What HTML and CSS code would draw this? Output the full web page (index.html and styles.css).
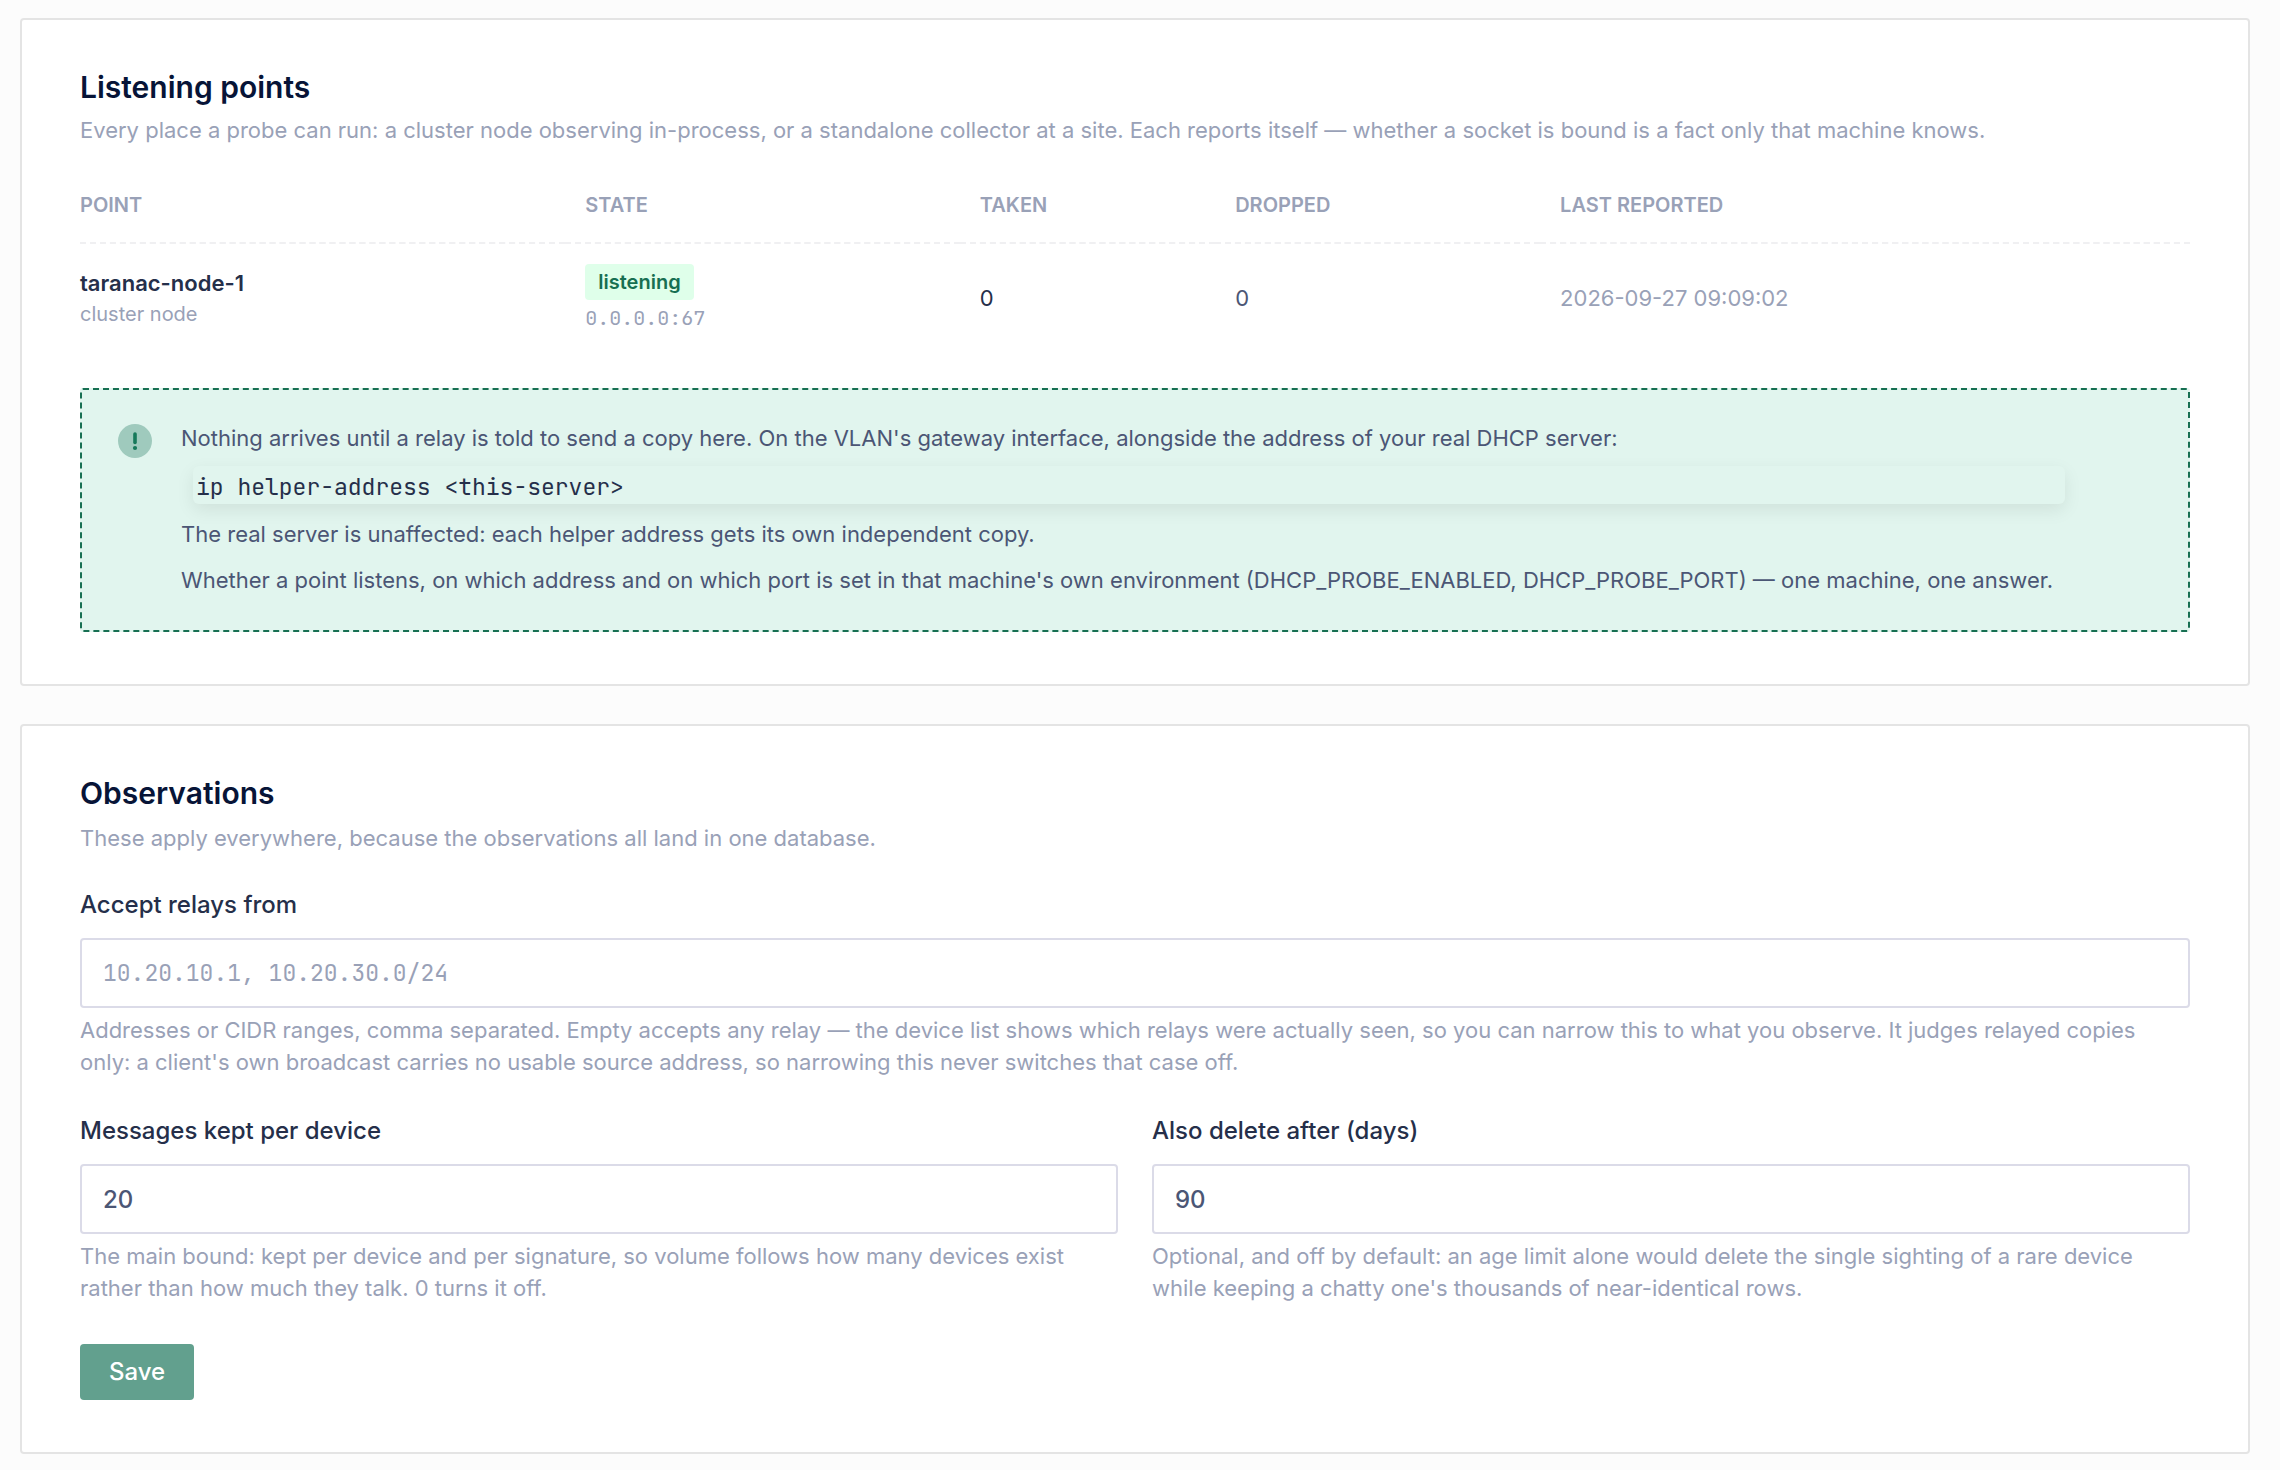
FILE: index.html
```html
<!DOCTYPE html>
<html lang="en">
<head>
  <meta charset="utf-8">
  <meta name="viewport" content="width=device-width, initial-scale=1">
  <title>DHCP probe settings</title>
  <link rel="stylesheet" href="styles.css">
</head>
<body>
  <main class="page">
    <section class="card">
      <h2 class="card-title">Listening points</h2>
      <p class="card-subtitle">Every place a probe can run: a cluster node observing in-process, or a standalone collector at a site. Each reports itself — whether a socket is bound is a fact only that machine knows.</p>

      <table class="points">
        <colgroup>
          <col class="col-point">
          <col class="col-state">
          <col class="col-taken">
          <col class="col-dropped">
          <col>
        </colgroup>
        <thead>
          <tr>
            <th scope="col">Point</th>
            <th scope="col">State</th>
            <th scope="col">Taken</th>
            <th scope="col">Dropped</th>
            <th scope="col">Last reported</th>
          </tr>
        </thead>
        <tbody>
          <tr>
            <td>
              <div class="point-name">taranac-node-1</div>
              <div class="point-kind">cluster node</div>
            </td>
            <td>
              <span class="badge">listening</span>
              <div class="point-address">0.0.0.0:67</div>
            </td>
            <td class="taken">0</td>
            <td>0</td>
            <td class="reported">2026-09-27 09:09:02</td>
          </tr>
        </tbody>
      </table>

      <div class="notice">
        <svg class="notice-icon" viewBox="0 0 34 34" aria-hidden="true">
          <circle cx="17" cy="17" r="17" fill="#9fcabd"/>
          <path d="M17 10v8.5" stroke="#17795a" stroke-width="3.6" stroke-linecap="round"/>
          <circle cx="17" cy="24" r="2.1" fill="#17795a"/>
        </svg>
        <div class="notice-body">
          <p>Nothing arrives until a relay is told to send a copy here. On the VLAN's gateway interface, alongside the address of your real DHCP server:</p>
          <code class="command">ip helper-address &lt;this-server&gt;</code>
          <p>The real server is unaffected: each helper address gets its own independent copy.</p>
          <p>Whether a point listens, on which address and on which port is set in that machine's own environment (DHCP_PROBE_ENABLED, DHCP_PROBE_PORT) — one machine, one answer.</p>
        </div>
      </div>
    </section>

    <section class="card">
      <h2 class="card-title">Observations</h2>
      <form class="form">
        <p class="form-intro">These apply everywhere, because the observations all land in one database.</p>

        <div class="field">
          <label for="relays">Accept relays from</label>
          <input class="mono" id="relays" type="text" placeholder="10.20.10.1, 10.20.30.0/24" aria-describedby="relays-help">
          <p class="help" id="relays-help">Addresses or CIDR ranges, comma separated. Empty accepts any relay — the device list shows which relays were actually seen, so you can narrow this to what you observe. It judges relayed copies only: a client's own broadcast carries no usable source address, so narrowing this never switches that case off.</p>
        </div>

        <div class="field-row">
          <div class="field">
            <label for="kept">Messages kept per device</label>
            <input id="kept" type="number" value="20" aria-describedby="kept-help">
            <p class="help" id="kept-help">The main bound: kept per device and per signature, so volume follows how many devices exist rather than how much they talk. 0 turns it off.</p>
          </div>
          <div class="field">
            <label for="days">Also delete after (days)</label>
            <input id="days" type="number" value="90" aria-describedby="days-help">
            <p class="help" id="days-help">Optional, and off by default: an age limit alone would delete the single sighting of a rare device while keeping a chatty one's thousands of near-identical rows.</p>
          </div>
        </div>

        <button class="save" type="button">Save</button>
      </form>
    </section>
  </main>
</body>
</html>
```
FILE: styles.css
```css
:root {
  --heading: #071437;
  --strong: #252f4a;
  --text: #4b5675;
  --muted: #99a1b7;
  --green: #176f52;
  --mono: "JetBrains Mono", "Liberation Mono", monospace;
}

* {
  box-sizing: border-box;
}

body {
  margin: 0;
  background: #fcfcfc;
  color: var(--text);
  font: 400 22px/32px Inter, "Liberation Sans", sans-serif;
}

h2,
p {
  margin: 0;
}

.page {
  display: flex;
  flex-direction: column;
  gap: 38px;
  padding: 18px 30px 16px 20px;
}

.card {
  padding: 48px 58px 52px;
  background: #fff;
  border: 2px solid #e4e4e4;
  border-radius: 4px;
}

.card-title {
  color: var(--heading);
  font-size: 30px;
  font-weight: 600;
  line-height: 38px;
}

.card-subtitle {
  margin-top: 8px;
  color: var(--muted);
}

/* Listening points table */

.points {
  width: 100%;
  margin-top: 24px;
  border-collapse: collapse;
  table-layout: fixed;
}

.col-point {
  width: 23%;
}

.col-state {
  width: 18.7%;
}

.col-taken {
  width: 12.1%;
}

.col-dropped {
  width: 15.4%;
}

.points th {
  padding: 20px 20px 22px;
  border-bottom: 2px dashed #f0f0f2;
  color: var(--muted);
  font-size: 20px;
  font-weight: 600;
  line-height: 30px;
  text-align: left;
  text-transform: uppercase;
}

.points td {
  padding: 20px;
  vertical-align: middle;
}

.points th:first-child,
.points td:first-child {
  padding-left: 0;
}

.points .taken {
  color: var(--strong);
}

.points .reported {
  color: var(--muted);
}

.point-name {
  color: var(--strong);
  font-weight: 600;
}

.point-kind {
  color: var(--muted);
  font-size: 20px;
  line-height: 30px;
}

.point-address {
  margin-top: 4px;
  color: var(--muted);
  font-family: var(--mono);
  font-size: 20px;
  line-height: 28px;
}

.badge {
  display: block;
  width: fit-content;
  padding: 3px 13px;
  background: #dfffea;
  border-radius: 4px;
  color: var(--green);
  font-size: 20px;
  font-weight: 600;
  line-height: 30px;
}

/* Relay notice */

.notice {
  display: flex;
  align-items: flex-start;
  gap: 29px;
  margin-top: 36px;
  padding: 32px 36px 34px;
  background: #e1f5ee;
  border: 2px dashed var(--green);
  border-radius: 3px;
}

.notice-icon {
  flex: none;
  width: 34px;
  height: 34px;
  margin-top: 2px;
}

.notice-body p + p {
  margin-top: 14px;
}

.command {
  display: block;
  margin: 12px -12px 14px 12px;
  padding: 5px 3px 1px;
  border-radius: 6px;
  background: #e1f5ee;
  box-shadow: 0 6px 18px rgba(0, 0, 0, 0.08);
  color: var(--strong);
  font-family: var(--mono);
  font-size: 23px;
}

/* Observations form */

.form-intro {
  margin-top: 10px;
  margin-bottom: 34px;
  color: var(--muted);
}

.field label {
  display: block;
  margin-bottom: 16px;
  color: var(--strong);
  font-size: 24px;
  font-weight: 500;
  line-height: 34px;
}

.field input {
  display: block;
  width: 100%;
  height: 70px;
  padding: 0 21px;
  background: #fff;
  border: 2px solid #dbdbe8;
  border-radius: 4px;
  color: var(--text);
  font: 500 24px/34px Inter, "Liberation Sans", sans-serif;
  appearance: textfield;
}

.field input.mono {
  font-family: var(--mono);
  font-size: 23px;
  font-weight: 400;
}

.field input::placeholder {
  color: var(--muted);
  opacity: 1;
}

.help {
  margin-top: 6px;
  color: var(--muted);
}

.field-row {
  display: grid;
  grid-template-columns: 1fr 1fr;
  gap: 34px;
  margin-top: 36px;
}

.save {
  display: block;
  margin-top: 40px;
  padding: 11px 29px;
  background: #62a08e;
  border: 0;
  border-radius: 4px;
  color: #fff;
  font: 500 24px/34px Inter, "Liberation Sans", sans-serif;
}
```
